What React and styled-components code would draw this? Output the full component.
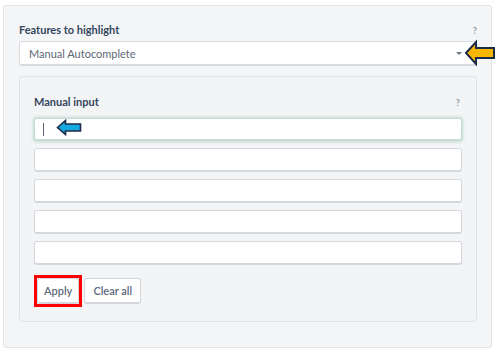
import React from "react";
import styled, { createGlobalStyle } from "styled-components";

const GlobalStyle = createGlobalStyle`
  html, body {
    margin: 0;
    padding: 0;
    background: #ffffff;
    font-family: Lato, "Liberation Sans", sans-serif;
  }
`;

const Panel = styled.div`
  margin: 5px 5px 0 3px;
  width: 489px;
  height: 343px;
  box-sizing: border-box;
  background: #f4f5f7;
  border: 1px solid #e2e5e8;
  border-radius: 3px;
  padding: 13px 14px 0 15px;
`;

const Header = styled.div`
  display: flex;
  justify-content: space-between;
  align-items: flex-end;
  height: 17px;
  margin-bottom: ${(props) => props.gap}px;
`;

const Label = styled.label`
  font-size: 11px;
  font-weight: 700;
  color: #34475d;
`;

const Help = styled.span`
  font-size: 9px;
  font-weight: 700;
  color: #7f9fb3;
  padding-right: ${(props) => props.pad || 0}px;
`;

const Select = styled.div`
  position: relative;
  height: 25px;
  box-sizing: border-box;
  display: flex;
  align-items: center;
  justify-content: space-between;
  padding: 0 14px 0 9px;
  background: #ffffff;
  border: 1px solid #d7dbe0;
  border-bottom-width: 2px;
  border-radius: 3px;
  font-size: 11px;
  color: #5c6776;
`;

const Caret = styled.span`
  width: 0;
  height: 0;
  border-left: 3px solid transparent;
  border-right: 3px solid transparent;
  border-top: 3px solid #6b7785;
  margin-top: 1px;
`;

const Pointer = styled.svg`
  position: absolute;
  left: ${(props) => props.x}px;
  top: ${(props) => props.y}px;
`;

const Box = styled.div`
  margin-top: 10px;
  width: 458px;
  box-sizing: border-box;
  background: #f3f4f6;
  border: 1px solid #dfe2e6;
  border-radius: 3px;
  padding: 14px;
`;

const Fields = styled.div`
  display: flex;
  flex-direction: column;
  gap: 7px;
`;

const Field = styled.div`
  position: relative;
  height: ${(props) => (props.focused ? 23 : 24)}px;
  box-sizing: border-box;
  background: #ffffff;
  border: 1px solid ${(props) => (props.focused ? "#c9ddd6" : "#d4d8dd")};
  border-bottom-width: 2px;
  border-radius: 3px;
  box-shadow: ${(props) =>
    props.focused ? "0 0 3px 1px rgba(150, 195, 180, 0.55)" : "none"};
`;

const Cursor = styled.span`
  position: absolute;
  left: 8px;
  top: 4px;
  width: 1px;
  height: 13px;
  background: #5a6472;
`;

const Actions = styled.div`
  display: flex;
  align-items: center;
  gap: 2px;
  margin-top: 10px;
`;

const Marked = styled.span`
  display: flex;
  border: 3px solid #ff0000;
`;

const Button = styled.button`
  height: 26px;
  padding: 0 ${(props) => props.pad}px;
  box-sizing: border-box;
  background: #ffffff;
  border: 1px solid #d3d7dc;
  border-bottom-width: 2px;
  border-radius: 3px;
  font-family: Lato, "Liberation Sans", sans-serif;
  font-size: 11px;
  font-weight: 600;
  color: #5d6a7b;
`;

const Arrow = ({ x, y, w, h, points, fill, stroke }) => (
  <Pointer x={x} y={y} width={w} height={h} viewBox={`0 0 ${w} ${h}`}>
    <polygon
      points={points}
      fill={fill}
      stroke="#1c2b47"
      strokeWidth={stroke}
      strokeLinejoin="miter"
    />
  </Pointer>
);

export default function App() {
  return (
    <>
      <GlobalStyle />
      <Panel>
        <Header gap={5}>
          <Label>Features to highlight</Label>
          <Help>?</Help>
        </Header>
        <Select>
          Manual Autocomplete
          <Caret />
          <Arrow
            x={444}
            y={-3}
            w={32}
            h={28}
            points="2,14 12,3 12,9 30,9 30,19 12,19 12,25"
            fill="#f7b600"
            stroke={2}
          />
        </Select>
        <Box>
          <Header gap={10}>
            <Label>Manual input</Label>
            <Help pad={2}>?</Help>
          </Header>
          <Fields>
            <Field focused>
              <Cursor />
              <Arrow
                x={21}
                y={0}
                w={26}
                h={17}
                points="1.5,8.5 9.5,1.5 9.5,5 24.5,5 24.5,12 9.5,12 9.5,15.5"
                fill="#16a9e1"
                stroke={1.6}
              />
            </Field>
            <Field />
            <Field />
            <Field />
            <Field />
          </Fields>
          <Actions>
            <Marked>
              <Button pad={6}>Apply</Button>
            </Marked>
            <Button pad={8}>Clear all</Button>
          </Actions>
        </Box>
      </Panel>
    </>
  );
}
